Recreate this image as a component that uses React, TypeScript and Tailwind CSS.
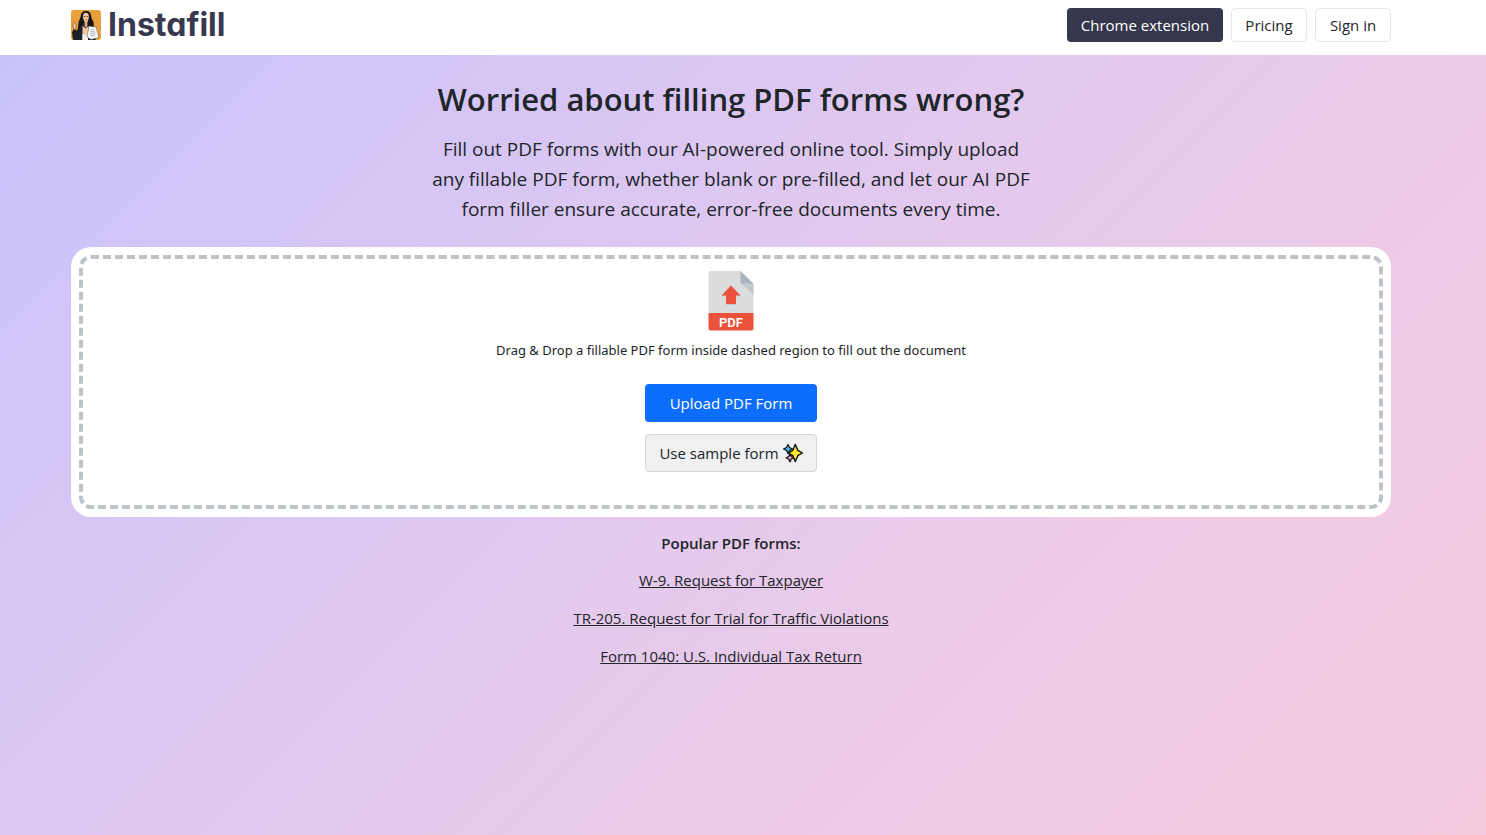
const popularForms = [
  { label: 'W-9. Request for Taxpayer', href: '#w-9' },
  { label: 'TR-205. Request for Trial for Traffic Violations', href: '#tr-205' },
  { label: 'Form 1040: U.S. Individual Tax Return', href: '#form-1040' },
]

function LogoMark() {
  return (
    <svg viewBox="0 0 30 30" className="size-[30px] rounded-[3px]" aria-hidden="true">
      <rect width="30" height="30" fill="#e9a03c" />
      {/* hair */}
      <path d="M15 1c-3.200 0-5 2-5.200 5C9.600 8.500 8 10 7.500 12.500c-.5 2.200.3 4-1 6.500L9 23h11l3-5c-.8-2 .4-3.500-.6-6-.9-2-1.900-3.200-2.200-5.500C19.800 2.500 18 1 15 1z" fill="#17151a" />
      {/* jacket */}
      <path d="M1 22l2-3 2.500 1.500L9 17l4-1 6 1 4 4 2 10H2z" fill="#1d1f2b" />
      <path d="M11.500 15.500l3 3L18 16l-1.500 14h-5z" fill="#ecc7a6" />
      <path d="M11.500 24l2.500 1 3-1.500V30h-5.500z" fill="#f3f1ee" />
      {/* face and neck */}
      <path d="M13.500 11h3v5l-1.500 2-1.500-2z" fill="#d9a27b" />
      <path d="M11.900 6.200c.3-2.400 1.400-3.400 3.100-3.400s2.900 1.200 2.900 3.600c0 3-1.200 5.400-2.900 5.800-1.800-.4-3.200-3-3.100-6z" fill="#efc7a4" />
      <path d="M12.700 6.600h1.700M15.700 6.600h1.600" stroke="#30211f" strokeWidth=".8" />
      <path d="M14.200 9.700h1.600" stroke="#b53f3a" strokeWidth=".8" />
      {/* raised hand */}
      <path d="M2 13.500l1.400-1.500 1 1.600.9 1.500-.8 4-1.500.7-1-3z" fill="#efc49c" stroke="#6b3d1d" strokeWidth=".5" />
      {/* papers */}
      <path d="M18 16l7.200 1.200 2.800 10.300-7.800 2-4.200-2.500z" fill="#f6f5f2" stroke="#54525a" strokeWidth=".5" />
      <path d="M19.500 19.500l4 .5M19 21.500l5 .6M19 23.500l5.500.5M19.500 25.500l4 .3" stroke="#8d8b91" strokeWidth=".6" />
    </svg>
  )
}

function PdfUploadIcon() {
  return (
    <svg viewBox="0 0 60 60" className="size-[60px]" aria-hidden="true">
      <path d="M9.500 0H39.500l13 12.800V43h-45V2c0-1.200.8-2 2-2z" fill="#dadcde" />
      <path d="M41 12.800h11.500V24z" fill="#c2c7cb" />
      <path d="M39.500 0L52.500 12.800H41.500c-1.200 0-2-.8-2-2z" fill="#a9b4be" />
      <path d="M7.500 42h45v15.500c0 1.200-.8 2-2 2h-41c-1.200 0-2-.8-2-2z" fill="#eb523b" />
      <path d="M30 15.500l9.500 10h-4.500V34H25v-8.500h-4.500z" fill="#c5c8ca" />
      <path d="M30 14.500l9.500 10h-4.500V33H25v-8.500h-4.500z" fill="#eb523b" />
      <text x="30" y="56" textAnchor="middle" fill="#fff" fontSize="13" fontWeight="600" fontFamily="Roboto, sans-serif">
        PDF
      </text>
    </svg>
  )
}

function SparklesIcon() {
  return (
    <svg viewBox="0 0 20 20" className="size-5" strokeLinejoin="round" stroke="#111" aria-hidden="true">
      <path d="M5 1.500l1.500 3L9.500 6 6.500 7.500 5 10.500 3.500 7.500.5 6l3-1.500z" fill="#43bdf0" strokeWidth="1.200" />
      <path d="M7 10.500l1.300 3 2.700 1.300-2.700 1.200L7 19l-1.300-3L3 14.800l2.700-1.300z" fill="#f59ac0" strokeWidth="1.200" />
      <path d="M12.300 1.500l2.500 5.800 4.700 2.700-4.700 2.700-2.500 5.800-2.500-5.800L5.500 10l4.300-2.700z" fill="#fdea2e" strokeWidth="1.400" />
    </svg>
  )
}

function Header() {
  return (
    <header className="flex h-[55px] items-start justify-between bg-white pt-2 pr-[95px] pl-[71px]">
      <a href="#home" className="flex h-[34px] items-center gap-[7px]">
        <LogoMark />
        <span className="font-[Inter,sans-serif] text-[32px] leading-[34px] font-bold text-[#38384f] [font-feature-settings:'cv11']">
          Instafill
        </span>
      </a>
      <nav className="flex gap-2 text-[15px]">
        <a href="#extension" className="flex h-[34px] w-[156px] items-center justify-center rounded bg-[#36364c] text-white">
          Chrome extension
        </a>
        <a href="#pricing" className="flex h-[34px] w-[76px] items-center justify-center rounded border border-[#e6e7ea]">
          Pricing
        </a>
        <a href="#sign-in" className="flex h-[34px] w-[76px] items-center justify-center rounded border border-[#e6e7ea]">
          Sign in
        </a>
      </nav>
    </header>
  )
}

export default function App() {
  return (
    <div className="flex min-h-screen flex-col font-['Open_Sans','Noto_Sans',sans-serif] text-[#212529]">
      <Header />

      <main className="flex-1 bg-linear-[135deg,#c9c3fc,#eccbe8_66%,#f5cadf] pt-[25px] pr-[95px] pb-10 pl-[71px] text-center">
        <h1 className="text-[31px] leading-[38px] font-semibold">Worried about filling PDF forms wrong?</h1>
        <p className="mx-auto mt-4 max-w-[610px] text-[19px] leading-[30px]">
          Fill out PDF forms with our AI-powered online tool. Simply upload any fillable PDF form, whether blank or
          pre-filled, and let our AI PDF form filler ensure accurate, error-free documents every time.
        </p>

        <section className="mt-[23px] rounded-[20px] bg-white p-2">
          <div className="flex flex-col items-center rounded-xl border-4 border-dashed border-[#bdc3c7] pt-3 pb-[33px]">
            <PdfUploadIcon />
            <p className="mt-2 font-['Noto_Sans',sans-serif] text-[13px] leading-[22px]">
              Drag &amp; Drop a fillable PDF form inside dashed region to fill out the document
            </p>
            <button type="button" className="mt-[23px] h-[38px] w-[172px] rounded bg-[#0d6efd] text-[15px] text-white">
              Upload PDF Form
            </button>
            <button
              type="button"
              className="mt-3 flex h-[38px] w-[172px] items-center justify-center gap-1 rounded border border-[#d6d6d6] bg-[#f0f0f0] text-[15px]"
            >
              Use sample form
              <SparklesIcon />
            </button>
          </div>
        </section>

        <section className="mt-[14px] text-[15px] leading-6">
          <h2 className="font-semibold">Popular PDF forms:</h2>
          <ul className="mt-[13px] space-y-[14px]">
            {popularForms.map((form) => (
              <li key={form.href}>
                <a href={form.href} className="underline">
                  {form.label}
                </a>
              </li>
            ))}
          </ul>
        </section>
      </main>
    </div>
  )
}
